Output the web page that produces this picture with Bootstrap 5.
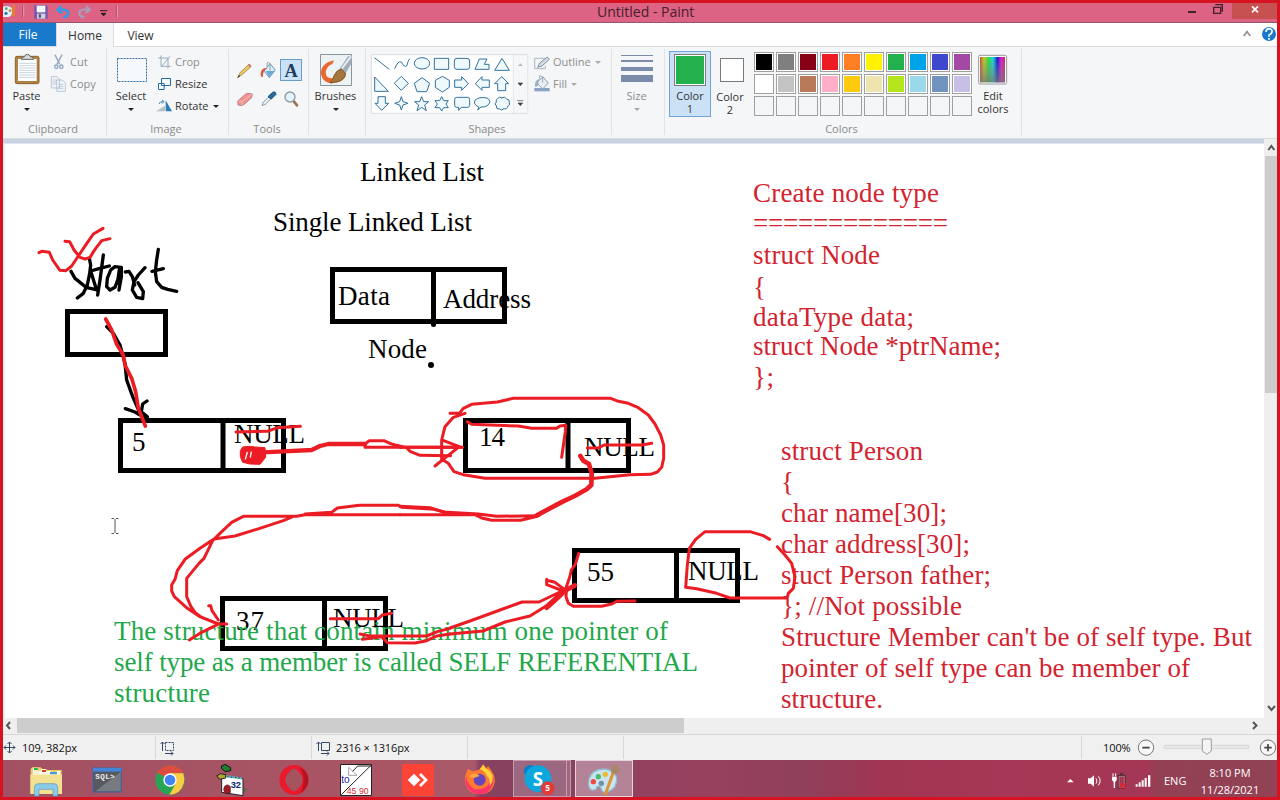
<!DOCTYPE html>
<html lang="en">
<head>
<meta charset="utf-8">
<title>Untitled - Paint</title>
<link href="https://cdn.jsdelivr.net/npm/bootstrap@5.3.0/dist/css/bootstrap.min.css" rel="stylesheet">
<script src="https://cdn.jsdelivr.net/npm/bootstrap@5.3.0/dist/js/bootstrap.bundle.min.js"></script>
<style>
body{width:1280px;height:800px;overflow:hidden;border:3px solid #d81321;font:11px/16px "Open Sans","Noto Sans",sans-serif;color:#333;background:#fff}
svg{display:block;flex:none;overflow:visible}
.titlebar{height:20px;background:#dc6384;border-bottom:1px solid #93566a}
.title-text{font-size:14px;line-height:18px;color:#43202c;padding-left:474px}
.win-close{width:45px;height:16px;background:#c75050}
.tabs{height:24px;border-bottom:1px solid #dadbdc;font-size:12px}
.tabs>span{height:24px;line-height:25px;text-align:center}
.tab-file{width:53px;background:#1979ca;color:#fff;height:23px!important;padding-right:3px;line-height:24px!important}
.tab-home{width:58px;background:#f5f6f7;border:solid #dadbdc;border-width:0 1px}
.ribbon{height:92px;background:#f5f6f7;border-bottom:1px solid #dadbdc}
.rgroup{position:relative;height:91px}
.rgroup::after{content:"";position:absolute;right:0;top:2px;bottom:3px;width:1px;background:#e2e3e4}
.rbody{height:74px}
.rlabel{height:16px;line-height:16px;text-align:center;color:#8a8a8a;padding-right:4px}
.rbtn{height:74px;text-align:center;flex:none}
.caret{width:0;height:0;border:3px solid transparent;border-top-color:#222;border-bottom:0}
.off{color:#8d8d8d}.off .caret{border-top-color:#aaa}
.rows{padding-top:4px}
.rows>div{height:22px;line-height:22px;white-space:nowrap}
.clr{width:42px;height:66px;margin-top:4px;line-height:13px;text-align:center;padding-top:3px;border:1px solid transparent}
.clr-on{background:#cbe1f6;border-color:#73a4d4;padding-top:2px}
.sw-lg{width:32px;height:32px;border:1px solid #7b7b7b;padding:1px;background:#fff;margin-bottom:3px}
.sw-md{width:24px;height:24px;border:1px solid #7b7b7b;background:#fff;margin:3px auto 4px}
.palette{display:grid;grid-template-columns:repeat(10,20px);align-content:start;gap:2px;width:218px;margin:5px 0 0 1px}
.palette i{height:20px;border:1px solid #a0a0a0;padding:1px;background-clip:content-box;display:block}
.palette i.filled{outline:1px solid #fff;outline-offset:-2px}
.strip{height:5px;background:#c8d1e1;border-bottom:1px solid #dfe5ee}
.vbar{width:13px;background:#efefef}
.vthumb{height:237px;background:#cdcdcd;margin-left:1px}
.hbar{height:16px;background:#efefef}
.hthumb{width:667px;height:15px;background:#cdcdcd}
.status{height:26px;background:#f0f0f0;border-top:1px solid #d7d7d7;color:#111}
.status>div{height:23px;margin-top:1px;border-right:1px solid #d7d7d7;letter-spacing:-.1px}
.taskbar{height:37px;color:#fff;background:linear-gradient(90deg,#a25163 0,#a95564 380px,#a85a68 471px,#87425f 477px,#85415e 520px,#98415f 700px,#90405b 800px,#a03552 880px,#a63756 1000px,#a43755 1144px,#934055 1155px,#914255 100%)}
.runapp{height:37px;border:1px solid #c99cab;background:#9c6881}
.run-skype{width:54px}
.run-stack{width:4px}
.run-paint{width:58px;background:#b58398;border-color:#e6d2da}
.tray-lang{width:34px;padding:13px 0 0 3px}
.tray-clock{width:70px;padding-top:4px;line-height:17px;margin-right:12px}
.cv{overflow:hidden}
.cv text{font-family:"Liberation Serif",serif;font-size:27px}
.ink{fill:none;stroke:#ec1c24;stroke-width:9;stroke-linejoin:round;stroke-linecap:round}
.pen{fill:none;stroke:#000;stroke-width:10;stroke-linejoin:round;stroke-linecap:round}
</style>
</head>
<body class="d-flex flex-column">
<header class="titlebar d-flex flex-shrink-0">
 <svg width="120" height="19" viewBox="9 9 360 57"><path d="M9 20q14-5 26 3l1 16q-3 12-12 12H9z" fill="#dff3f5"/><circle cx="19" cy="26" r="4" fill="#53a76d"/><circle cx="18" cy="40" r="5" fill="#317dad"/><circle cx="30" cy="32" r="4" fill="#b85"/><path d="M42 14l-2 34" stroke="#e98322" stroke-width="7"/><path d="M71 16v36M352 16v36" stroke="#e9a1b3" stroke-width="3"/><path d="M68 16v36M349 16v36" stroke="#92485d" stroke-width="2"/><path d="M103 16h36l4 5v35h-40z" fill="#7555ad"/><path d="M110 17h26v20h-26z" fill="#f2fafa"/><path d="M111 41h25v15h-25z" fill="#ccd5db"/><path d="M116 43h7v10h-7z" fill="#664b79"/><path d="M184 18l-11 12 14 10M174 29h18q14 2 13 12-3 10-15 12" fill="none" stroke="#279fe8" stroke-width="7"/><path d="M258 18l11 12-14 10M268 29h-18q-13 2-12 12 3 10 15 12" fill="none" stroke="#aa9bb8" stroke-width="7"/><path d="M300 32h22M303 40h15l-7 7z" stroke="#2b1a20" stroke-width="3" fill="#2b1a20"/></svg>
 <div class="title-text flex-grow-1">Untitled - Paint</div>
 <svg width="52" height="19" viewBox="480 9 156 57"><path d="M504 33h24v6h-24z" fill="#43202c"/><path d="M581 22h21v18h-21zM586 14h21v21" fill="none" stroke="#43202c" stroke-width="4"/></svg>
 <div class="win-close"><svg width="45" height="16" viewBox="636 9 135 48"><path d="M696 19l18 18M714 19l-18 18" stroke="#fff" stroke-width="5"/></svg></div>
</header>
<nav class="tabs d-flex flex-shrink-0">
 <span class="tab-file">File</span><span class="tab-home">Home</span><span style="width:53px">View</span>
 <svg class="ms-auto" width="37" height="23" viewBox="660 69 111 69"><path d="M671 108l10-13 10 13" fill="none" stroke="#929292" stroke-width="5"/><circle cx="747" cy="102" r="21" fill="#1979ca"/><path d="M738 96q1-10 9-10 10 1 9 10-1 5-9 10v4m0 4v5" fill="none" stroke="#fff" stroke-width="5"/></svg>
</nav>
<section class="ribbon d-flex flex-shrink-0">
 <div class="rgroup" style="width:104px">
  <div class="rbody d-flex">
   <div class="rbtn" style="width:47px"><svg width="47" height="41" viewBox="9 141 141 123"><rect x="46" y="169" width="71" height="82" rx="5" fill="#b18143" stroke="#8c642e" stroke-width="3"/><path d="M54 177h56v66H54z" fill="#fff"/><path d="M57 190h50M57 197h50M57 204h50M57 211h50M57 218h50M57 225h50M57 232h50" stroke="#aebdd0" stroke-width="2"/><path d="M64 178q0-8 10-8 1-7 8-7t9 7q10 0 10 8z" fill="#d8dadb" stroke="#5e6266" stroke-width="3"/></svg>Paste<div class="caret mx-auto mt-1"></div></div>
   <div class="rows off"><div class="d-flex"><svg width="20" height="22" viewBox="150 153 60 66"><path d="M165 164l14 29M186 164l-15 29" stroke="#8fa3bd" stroke-width="4"/><circle cx="169" cy="200" r="5" fill="none" stroke="#8fa3bd" stroke-width="4"/><circle cx="184" cy="200" r="5" fill="none" stroke="#8fa3bd" stroke-width="4"/></svg>Cut</div>
   <div class="d-flex"><svg width="20" height="22" viewBox="150 219 60 66"><path d="M154 230h17l8 8v26h-25zM170 240h17l9 9v25h-26z" fill="#f0f4f9" stroke="#a3b3c8" stroke-width="2"/><path d="M158 240h14M158 246h11M158 252h11M175 253h15M175 259h15M175 265h15" stroke="#a9bad0" stroke-width="2"/></svg>Copy</div></div>
  </div><div class="rlabel">Clipboard</div></div>
 <div class="rgroup" style="width:122px">
  <div class="rbody d-flex">
   <div class="rbtn" style="width:48px"><svg width="48" height="41" viewBox="321 141 144 123"><path d="M352.500 175.500h87v69h-87z" fill="#f5f9fc" stroke="#326d9d" stroke-width="3" stroke-dasharray="6 3"/></svg>Select<div class="caret mx-auto mt-1"></div></div>
   <div class="rows"><div class="d-flex off"><svg width="20" height="22" viewBox="465 153 60 66"><path d="M483 166v33h29M475 174h29v31M484 200l26-31" fill="none" stroke="#98a9c0" stroke-width="3"/></svg>Crop</div>
   <div class="d-flex"><svg width="20" height="22" viewBox="465 219 60 66"><path d="M475.500 250.500h17v18h-17zM484.500 235.500h27v21h-27z" fill="#f6fcff" stroke="#246ba3" stroke-width="3"/></svg>Resize</div>
   <div class="d-flex align-items-center"><svg width="20" height="22" viewBox="465 285 60 66"><path d="M468 334l27-17v17z" fill="#b4bfc8"/><path d="M497 334v-33l19 33z" fill="#2b7db6"/><path d="M477 312q2-8 13-7m-4-5 6 5-6 6" fill="none" stroke="#3d83c0" stroke-width="3"/></svg>Rotate<div class="caret ms-1"></div></div></div>
  </div><div class="rlabel">Image</div></div>
 <div class="rgroup" style="width:80px">
  <div class="rbody"><svg width="80" height="74" viewBox="687 141 240 222"><rect x="841.500" y="178.500" width="63" height="63" fill="#cbe1f6" stroke="#669dcb" stroke-width="3"/><text x="873" y="230" text-anchor="middle" font-family="Liberation Serif" font-weight="bold" font-size="55" fill="#203d62">A</text><path d="M713 233l8-16 26-24 6 7-28 25z" fill="#f0cb64" stroke="#846333" stroke-width="2"/><path d="M745 195l4-3 5 6-5 4z" fill="#d5646e"/><path d="M712 234l5-9 3 4z" fill="#333"/><path d="M792 213l18-22 16 19-18 23z" fill="#d9ecf7" stroke="#719ab7" stroke-width="3"/><path d="M797 213h28l-17 19z" fill="#6ea8d4"/><path d="M801 201v-12q5-4 9 1v22" fill="none" stroke="#738393" stroke-width="2"/><path d="M783 230q-4-19 9-25l9 0-9 8q-4 8-3 17z" fill="#dd5838"/><path d="M713 303l24-21q3-2 7-2l13 2-2 11-21 19-9 5-11-2z" fill="#ef9695" stroke="#ad6267" stroke-width="2"/><path d="M714 303l13 2 29-22M727 305l-2 11" fill="none" stroke="#fac5bf" stroke-width="2"/><path d="M786 317l4-11 18-16 6 6-18 17z" fill="#e4f0f7" stroke="#65798e" stroke-width="2"/><path d="M804 290l14-13q9-4 10 6l-14 14z" fill="#286a9c" stroke="#164b78" stroke-width="3"/><path d="M882 305l9 11" stroke="#a06f4a" stroke-width="8" stroke-linecap="round"/><circle cx="870" cy="291" r="15" fill="#e2f3fd" stroke="#8e999f" stroke-width="4"/></svg></div>
  <div class="rlabel">Tools</div></div>
 <div class="rgroup" style="width:57px"><div class="rbtn" style="width:53px"><svg width="53" height="41" viewBox="-3 141 159 123"><path d="M31.500 163.500h93v93h-93z" fill="#edf2f4" stroke="#8a969b" stroke-width="3"/><path d="M72 181q-42 10-39 42 5 25 33 28l14-19q-33 10-33-16 2-17 20-24z" fill="#e9662e"/><path d="M88 207l26-38 11-2v22l-19 32z" fill="#9facba"/><path d="M96 205l27-36" stroke="#e7ebef" stroke-width="6"/><path d="M60 248q9-7 13-23 8-17 22-17l12 13q-2 27-47 27z" fill="#a4763d" stroke="#855524" stroke-width="3"/></svg>Brushes<div class="caret mx-auto mt-1"></div></div></div>
 <div class="rgroup" style="width:246px"><div class="rbody d-flex">
  <svg width="164" height="74" viewBox="168 141 492 222"><path d="M184 164h469v176H184zM610 164v176" fill="#fff" stroke="#dadde0" stroke-width="3"/><path d="M611 165h41v174h-41z" fill="#f6f7f8"/>
  <g fill="#eff9fc" stroke="#33719d" stroke-width="3"><path d="M193 173l45 35M254 206q10-25 20-20 10 18 16 12 4-15 9-22" fill="none"/><ellipse cx="336" cy="190" rx="23" ry="17"/><path d="M373 175h43v33h-43z"/><rect x="433" y="175" width="46" height="33" rx="8"/><path d="M495 208l13-31h23l-8 16h14v15zM576 175l22 36h-44zM194 231v43h41zM274 229l21 21-21 21-21-21zM336 233l23 17-9 25h-29l-8-25zM397 229l21 12v21l-21 14-21-14v-21zM434 240h21v-10l20 21-20 20v-9h-21zM538 240h-22v-10l-20 21 20 20v-9h22zM575 230l21 21h-9v21h-24v-21h-9zM204 290h22v20h10l-21 21-20-21h9zM274 290l5 15 15 5-15 5-5 15-5-15-15-5 15-5zM335 290l6 15h15l-12 10 5 17-14-10-14 10 5-17-12-10h15zM395 290l6 12h14l-7 10 7 11h-14l-6 10-6-10h-14l7-11-7-10h14zM440 292h33q6 0 6 7v17q0 6-6 6h-19l-8 9v-9h-6q-6 0-6-6v-17q0-7 6-7zM507 322q-19-10-12-21 12-12 36-7 16 9 2 22-7 6-20 5l-10 9zM562 296q6-8 14-2 8-7 14 3 10 1 8 10 4 9-5 12-1 10-11 7-8 8-14 1-10 1-9-9-8-7 0-12-2-9 3-10z"/></g><path d="M624 198l7-8 7 8z" fill="#b4b8bd"/><path d="M624 249h14l-7 8zM622 302h18M624 309h14l-7 8z" fill="#444" stroke="#444" stroke-width="2"/></svg>
  <div class="rows off"><div class="d-flex align-items-center"><svg width="23" height="22" viewBox="660 153 69 66"><path d="M674 175h32M674 175v31h32v-9" fill="none" stroke="#aab7c7" stroke-width="3"/><path d="M683 202l6-13 23-18 6 7-22 20z" fill="#d2dbe5" stroke="#8093a9" stroke-width="3"/></svg>Outline<div class="caret ms-1"></div></div><div class="d-flex align-items-center"><svg width="23" height="22" viewBox="660 219 69 66"><path d="M673 264h46v10h-46z" fill="#8ba2c3"/><path d="M680 248l19-17 16 18-17 18z" fill="#e7eef4" stroke="#8ca0b4" stroke-width="3"/><path d="M675 260q-2-18 12-23l-4 22z" fill="#9badc1"/><path d="M689 238v-11l9 3v18" fill="none" stroke="#8193a5" stroke-width="2"/></svg>Fill<div class="caret ms-1"></div></div></div>
 </div><div class="rlabel">Shapes</div></div>
 <div class="rgroup off" style="width:53px"><div class="rbtn" style="width:49px"><svg width="49" height="41" viewBox="36 141 147 123"><path d="M63 165h96v3H63zM63 180h96v6H63zM63 201h96v12H63zM63 225h96v21H63z" fill="#7b8cab"/></svg>Size<div class="caret mx-auto mt-1"></div></div></div>
 <div class="rgroup" style="width:357px"><div class="rbody d-flex" style="padding-left:4px">
  <div class="clr clr-on"><div class="sw-lg mx-auto"><div class="h-100" style="background:#22b14c"></div></div>Color<br>1</div>
  <div class="clr"><div class="sw-md"></div><div class="pt-1 pe-1">Color<br>2</div></div>
  <div class="palette" id="palette"></div>
  <div class="text-center" style="width:42px;line-height:13px"><svg width="42" height="42" viewBox="1119 141 126 126"><defs><linearGradient id="hue"><stop stop-color="#c05040"/><stop offset=".16" stop-color="#c5ca26"/><stop offset=".35" stop-color="#24dd4b"/><stop offset=".52" stop-color="#1adbd6"/><stop offset=".7" stop-color="#1516d5"/><stop offset=".85" stop-color="#e21bd8"/><stop offset="1" stop-color="#d72451"/></linearGradient><linearGradient id="shade" x2="0" y2="1"><stop stop-color="#888" stop-opacity="0"/><stop offset="1" stop-color="#777" stop-opacity=".8"/></linearGradient></defs><rect x="1139" y="166" width="84" height="86" rx="4" fill="#fff" stroke="#979797" stroke-width="3"/><path d="M1143 171h75v76h-75z" fill="url(#hue)"/><path d="M1143 171h75v76h-75z" fill="url(#shade)"/></svg>Edit<br>colors</div>
 </div><div class="rlabel">Colors</div></div>
</section>
<main class="d-flex flex-shrink-0" style="height:579px">
 <div style="width:1261px"><div class="strip"></div>
 <svg class="cv" width="1261" height="574" viewBox="3 144 1261 574">
  <path d="M4 144v574" stroke="#dcdfe9" stroke-width="1"/>
  <g fill="none" stroke="#000" stroke-width="5"><path d="M67.500 311.500h98v43h-98zM332.500 269.500h172v52h-172zM433.500 269v56M120.500 420.500h163v50h-163zM223 420v50M465.500 420.500h163v50h-163zM568 420v50M222.500 598.500h163v50h-163zM324.500 598v50M574.500 550.500h163v50h-163zM676.500 550v50"/></g><circle cx="433.500" cy="324.500" r="2.500"/><circle cx="431" cy="365" r="3"/>
  <g id="labels"></g>
  <!-- handwritten "Start", its pointer and node 5 -->
  <g transform="translate(0 210) scale(.33333)">
   <path class="pen" d="M268 145L272 165 269 190 262 225 250 250 232 264M213 184L225 205 240 217 258 232 285 238M272 182L282 215 290 240M310 135L306 165 300 210 293 255M272 183L300 175 328 168M362 172L345 170 332 180 322 205 320 230 330 240 345 232 355 205 364 172 364 200 357 240M358 180L352 220M376 186L387 184 397 200 404 225M435 173L415 195 402 215 397 240 410 262 428 266 430 245 414 218M475 118L470 150 466 185 470 215 485 232 503 238 530 244M456 184L490 176M320 350L340 370 360 405 375 460 380 510 398 560 420 610M376 596L405 606 420 615 442 622M441 573L428 582 424 605 442 620"/>
   <path class="ink" d="M117 128L125 124 148 127 158 150 180 181 198 182 215 168 237 135 262 98 280 72 309 55M195 94L209 95 222 120 240 142 255 147 270 142 285 118 305 92 330 86M708 666L803 664 832 653 901 649"/>
   <path class="ink" style="stroke-width:11" d="M317 327L335 360 350 403 370 435 375 465 395 505 407 545 415 595 436 648"/>
   <path d="M728 711L748 709 765 711 795 713 797 742 780 763 750 762 728 757 721 740 721 722z" fill="#ec1c24" stroke="#ec1c24" stroke-width="3"/><path d="M742 726L736 748M754 725l-3 18" stroke="#fff" stroke-width="4"/>
  </g>
  <!-- link from node 5 to node 14 -->
  <g class="ink" transform="translate(220 250) scale(.33333)"><path stroke-width="13" d="M130 607L190 604 275 600 300 588 325 582 435 582"/><path d="M435 592V582L448 572 492 572 510 580 530 586 560 593 570 604 600 616 692 617M435 592H728M669 571L718 590 680 620 645 648"/></g>
  <g class="ink" transform="translate(400 380) scale(.33333)"><path d="M150 100L178 100 190 85 215 73 292 66 340 55H632L655 64 685 70 715 83 745 105 765 132 782 165 791 195 791 235 785 262 772 276 752 283 690 284 585 295H255L190 284 162 275 145 250 125 238 125 180 135 140 160 112 195 100M202 125L215 133 355 138 395 145H470L480 138 497 136 496 155 485 232M562 204L597 203 612 195H725L755 190M0 202H185M0 379L90 383 130 396 235 402 290 409 410 407M0 404H225L245 414 275 421H362L412 409 470 372 524 348"/><path stroke-width="14" d="M541 228L550 242 567 252 575 281 574 315 560 328 524 348 488 365 412 405"/></g>
  <!-- link from node 14 to node 37 -->
  <g class="ink" transform="translate(150 480) scale(.33333)"><path d="M750 104H465L440 109H280L245 127 213 157 188 182 162 235 147 250 110 295V350L122 378 135 397 155 412 205 432M465 102L545 97 562 84 628 76H745L755 82 852 88 900 100M430 109L400 122 320 148 255 168 192 177 150 205 105 238 82 272 75 298 65 315V333L73 350 112 385 150 410 205 432H230M176 377H182L186 392 205 420M208 431L155 457 118 480M541 416H685L697 405 725 400"/><path d="M630 462L660 468H830L862 455 900 445M637 478L695 470 712 488 795 489 830 482 860 468 900 462"/></g>
  <!-- link from node 37 to node 55 -->
  <g class="ink" style="stroke-width:3"><path d="M450 628L470 621 500 610 522 602H539L562 591M450 634L483 631 505 622 530 616 546 606 566 588"/></g>
  <g class="ink" transform="translate(530 510) scale(.33333)"><path d="M50 208V224L100 243M50 211L75 217 103 238"/><path stroke-width="14" d="M135 226L105 242 85 262 50 293"/><path d="M146 130L136 163 124 180 119 202 110 228 108 260 115 280 130 289H215L245 282 260 274 315 273M719 88L700 77 660 65H525L497 88 478 115 472 165 467 232 500 236 560 250 600 264H768M742 110L765 135 785 160 795 200 790 235 775 250 772 262"/></g>
  <path d="M111.500 518.500h2.500m2 0h2.500M115 519v14M111.500 533.500h2.500m2 0h2.500" stroke="#555" fill="none"/>
 </svg></div>
 <div class="vbar"><svg width="13" height="17" viewBox="732 418 39 51"><path d="M745 451l9-12 9 12" fill="none" stroke="#555" stroke-width="6"/></svg><div class="vthumb"></div><svg width="13" height="325"><path d="M4 313l3.500 4 3.500-4" fill="none" stroke="#555" stroke-width="2"/></svg></div>
</main>
<div class="hbar d-flex flex-shrink-0"><svg width="14" height="16"><path d="M7 4L4 7.500l3 3.500" fill="none" stroke="#555" stroke-width="2"/></svg><div class="hthumb"></div><svg class="ms-auto" width="27" height="16"><path d="M3 4l3.500 3.500L3 11" fill="none" stroke="#555" stroke-width="2"/></svg></div>
<footer class="status d-flex flex-shrink-0">
 <div class="d-flex align-items-center" style="width:153px"><svg width="19" height="23"><path d="M1 11.500h11M6.500 6v11M3 9.500l-2 2 2 2M10 9.500l2 2-2 2M4.500 8l2-2 2 2M4.500 15l2 2 2-2" fill="none" stroke="#334766"/></svg><span>109, 382px</span></div>
 <div style="width:156px"><svg width="156" height="23"><path d="M6.500 15V6M4.500 8l2-2 2 2M9 17.500h8m-2-2 2 2-2 2" fill="none" stroke="#334766"/><path d="M9.500 6.500h8v8h-8z" fill="none" stroke="#334766" stroke-dasharray="2 1"/></svg></div>
 <div class="d-flex align-items-center" style="width:156px"><svg width="24" height="23"><path d="M6.500 15V6M4.500 8l2-2 2 2M9 17.500h8m-2-2 2 2-2 2M9.500 6.500h8v8h-8z" fill="none" stroke="#334766"/></svg><span>2316 × 1316px</span></div>
 <div style="width:156px"></div><div style="width:458px"></div>
 <div class="d-flex align-items-center border-0 flex-grow-1" style="padding-left:21px"><span style="width:32px">100%</span><svg width="142" height="23" viewBox="525 139 426 69"><g fill="#f8f8f8" stroke="#777" stroke-width="3"><circle cx="558" cy="174" r="23"/><circle cx="924" cy="174" r="23"/></g><path d="M547 174h22M913 174h22M924 163v22" stroke="#444" stroke-width="5"/><path d="M613 167h253v9H613z" fill="#e8eaea" stroke="#ccc" stroke-width="2"/><path d="M727 148h27v36l-13 10-14-10z" fill="#f4f4f4" stroke="#9c9c9c" stroke-width="3"/></svg></div>
</footer>
<footer class="taskbar d-flex flex-shrink-0 ps-2"><div style="width:4px"></div>
 <svg width="62" height="37" viewBox="45 180 186 111"><path d="M92 282V206l5-4h25l8 8h55v72z" fill="#e8cd69"/><path d="M99 203h12v9h12v-5h16v6h14v5h16v-5h12v16H98z" fill="#f8f6df"/><path d="M102 204h11v6h-11z" fill="#23b34b"/><path d="M126 210h12v6h-12z" fill="#c8442c"/><path d="M150 216h21v7h-21z" fill="#4a9bd4"/><path d="M91 224h95v58H91z" fill="#f3e192"/><path d="M103 288v-27q2-10 12-10h47q10 0 11 10v27h-14v-20h-42v20z" fill="#8acbea" stroke="#5896bb" stroke-width="2"/></svg>
 <svg width="62" height="37" viewBox="231 180 186 111"><path d="M279 204h85v72h-85z" fill="#56595f" stroke="#3662ac" stroke-width="3"/><path d="M279 204h85v11h-85z" fill="#4385da"/><path d="M362 216v58h-76z" fill="#777b81"/><text x="286" y="237" font-family="Liberation Mono" font-weight="bold" font-size="23" textLength="58" fill="#eee">SQL&gt;</text></svg>
 <svg width="62" height="37" viewBox="417 180 186 111"><circle cx="510" cy="240" r="44" fill="#28a456"/><path d="M510 240L472 218Q485 196 510 196q27 0 40 24h-40z" fill="#df4c3f"/><path d="M510 220h40q10 34-14 55-12 9-28 9l20-35z" fill="#f8cd43"/><circle cx="510" cy="240" r="20" fill="#fff"/><circle cx="510" cy="240" r="16" fill="#4184f3"/></svg>
 <svg width="62" height="37" viewBox="603 180 186 111"><path d="M729 262l14 6-14 12z" fill="#665"/><path d="M665 228l64 8v51l-64-10z" fill="#fff" stroke="#222" stroke-width="3"/><path d="M664 226l65 10" stroke="#4bbfc4" stroke-width="6" stroke-dasharray="8 3"/><path d="M665 198l10-5 17 10v9l-16 3-12-10z" fill="#247e31" stroke="#111" stroke-width="3"/><path d="M650 228l11-7 16 3v10l-17 4z" fill="#b1a22e" stroke="#222" stroke-width="3"/><path d="M674 259q9-9 17 1v17q-7 10-17 0-6-8 0-18z" fill="#a71825" stroke="#222" stroke-width="2"/><text x="692" y="265" font-size="28" font-family="Liberation Sans" font-weight="bold" fill="#10246e">32</text></svg>
 <svg width="62" height="37" viewBox="789 180 186 111"><ellipse cx="882" cy="240" rx="35" ry="36" fill="none" stroke="#e91a2c" stroke-width="18"/><ellipse cx="882" cy="240" rx="20" ry="34" fill="#a5535f"/><path d="M898 202q27 12 27 39 0 23-26 40 12-14 12-40 0-22-13-39z" fill="#b31222"/></svg>
 <svg width="62" height="37" viewBox="975 180 186 111"><path d="M1021.500 193.500h93v93h-93z" fill="#fff" stroke="#222" stroke-width="3"/><path d="M1046 202v24h25z" fill="#fff" stroke="#777" stroke-width="2"/><path d="M1058 214l15-16h40M1024 284l88-87" fill="none" stroke="#222" stroke-width="3"/><text x="1024" y="250" font-family="Liberation Sans" font-size="30" fill="#2824a4">to</text><text x="1040" y="281" font-family="Liberation Sans" font-size="26" textLength="66" fill="#d52835">45 90</text></svg>
 <svg width="62" height="37" viewBox="-39 180 186 111"><path d="M6 192h96v96H6z" fill="#fb4336"/><path d="M42 221l19 19-19 19-19-19z" fill="#fff"/><path d="M60 222l18 18-18 18" fill="none" stroke="#fff" stroke-width="8"/></svg>
 <svg width="62" height="37" viewBox="147 180 186 111"><path d="M204 207l14 7q13-2 21-6l10-16 8 12 8-5q20 25 20 42-5 41-44 42-43-2-46-41 0-21 9-35z" fill="#ff7930"/><path d="M199 230q7 39 40 38 30-4 36-37l7 3-3 18q-10 30-38 31-39-3-45-38z" fill="#fb346b"/><path d="M239 208l12-14q2 9 14 16 18 14 12 35l-8 14q2-25-8-31-6-17-22-20z" fill="#ffd43d"/><circle cx="239" cy="239" r="18" fill="#6646bd"/><path d="M207 231q6-13 23-10l9 7-18 6z" fill="#ffa63e"/></svg>
 <div class="d-flex" style="width:64px;padding-left:2px"><div class="runapp run-skype"><svg width="52" height="35" viewBox="342 183 156 105"><circle cx="391" cy="214" r="19" fill="#087fcb"/><circle cx="434" cy="258" r="22" fill="#087fcb"/><circle cx="414" cy="236" r="40" fill="#0ba7dd"/><text x="414" y="257" text-anchor="middle" font-family="Open Sans" font-weight="bold" font-size="56" fill="#fff">S</text><circle cx="443" cy="265" r="21" fill="#e33b38"/><text x="443" y="274" text-anchor="middle" font-family="Open Sans" font-weight="bold" font-size="25" fill="#fff">5</text></svg></div><div class="runapp run-stack border-start-0"></div></div>
 <div class="runapp run-paint"><svg width="56" height="35" viewBox="528 183 168 105"><path d="M567 237q8-29 45-30 34 3 38 27 2 31-26 41-19 5-20-8-2-12-13-7-2 12-16 10-13-6-8-33z" fill="#c8e5ef" stroke="#8ebdce" stroke-width="4"/><circle cx="580" cy="245" r="8" fill="#ee4940"/><circle cx="595" cy="230" r="8" fill="#50b867"/><circle cx="616" cy="223" r="8" fill="#e9bb31"/><circle cx="604" cy="250" r="8" fill="#718eaa"/><path d="M615 286l25-69" stroke="#df9337" stroke-width="9"/><path d="M633 217l3-19 12-3 12 11-2 8q-6 7-15 9z" fill="#a88667"/></svg></div>
 <svg class="ms-auto" width="100" height="37" viewBox="303 210 300 111"><path d="M321 277l10-10 10 10zM384 265h8l10-9v34l-10-9h-8z" fill="#fff"/><path d="M408 265q6 8 0 16M415 259q11 13 0 27" stroke="#fff" stroke-width="3" fill="none"/><path d="M475 257h20v37h-20zM480 252h10" fill="none" stroke="#4c2935" stroke-width="4"/><path d="M477 259h16v33h-16z" fill="none" stroke="#b99" stroke-width="2"/><path d="M459 250v9M467 250v9" stroke="#fff" stroke-width="3"/><path d="M456 260h14v10l-5 7v17h-4v-17l-5-7z" fill="#fff"/><path d="M480 280l17 15m0-15-17 15" stroke="#e52633" stroke-width="5"/><path d="M527 283h6v7h-6zM536 277h6v13h-6zM545 271h6v19h-6zM554 264h6v26h-6zM564 256h7v34h-7z" fill="#fff"/></svg>
 <div class="tray-lang">ENG</div><div class="tray-clock text-center"><div>8:10 PM</div><div>11/28/2021</div></div>
</footer>
<script>
const colors=['#000','#7f7f7f','#880015','#ed1c24','#ff7f27','#fff200','#22b14c','#00a2e8','#3f48cc','#a349a4','#fff','#c3c3c3','#b97a57','#ffaec9','#ffc90e','#efe4b0','#b5e61d','#99d9ea','#7092be','#c8bfe7'];
for(let i=0;i<30;i++){const c=document.createElement('i');if(i<20){c.className='filled';c.style.backgroundColor=colors[i]}document.getElementById('palette').append(c)}
const K='#000',G='#22a84b',R='#d2232f';
/* text, left edge, baseline, width, colour */
const labels=[['Linked List',360,180,124,K],['Single Linked List',273,230,199,K],['Data',338,304,52,K],['Address',443,307,88,K],['Node',368,357,59,K],['5',132,450,13,K],['NULL',234,442,71,K],['14',479,445,26,K],['NULL',584,455,71,K],['37',236,629,28,K],['NULL',333,626,71,K],['55',587,580,27,K],['NULL',688,579,71,K],
['The structure that contain minimum one pointer of',114,639,554,G],['self type as a member is called SELF REFERENTIAL',114,670,584,G],['structure',114,701,96,G],
['Create node type',753,201,186,R],['=============',753,231,195,R],['struct Node',753,263,127,R],['{',753,295,13,R],['dataType data;',753,325,161,R],['struct Node *ptrName;',753,354,248,R],['};',753,385,21,R],
['struct Person',781,459,142,R],['{',781,490,13,R],['char name[30];',781,521,166,R],['char address[30];',781,552,189,R],['stuct Person father;',781,583,210,R],['}; //Not possible',781,614,181,R],["Structure Member can't be of self type. But",781,645,471,R],['pointer of self type can be member of',781,676,409,R],['structure.',781,707,102,R]];
for(const [s,x,y,w,f] of labels){const t=document.createElementNS('http://www.w3.org/2000/svg','text');t.textContent=s;t.setAttribute('x',x);t.setAttribute('y',y+.6);t.setAttribute('textLength',w);t.setAttribute('fill',f);document.getElementById('labels').append(t)}
</script>
</body>
</html>
